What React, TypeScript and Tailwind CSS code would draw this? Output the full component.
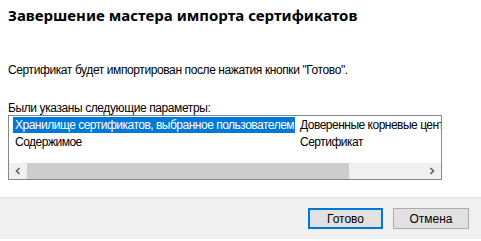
const rows = [
  { name: "Хранилище сертификатов, выбранное пользователем", value: "Доверенные корневые центры сертификации", selected: true },
  { name: "Содержимое", value: "Сертификат", selected: false },
];

const App = () => {
  return (
    <div
      className="w-[481px] h-[241px] bg-white flex flex-col overflow-hidden text-black"
      style={{ fontFamily: '"Liberation Sans", Arial, sans-serif' }}
    >
      <div className="flex-1 pl-2">
        <h1
          className="pt-[5px] text-[15px] leading-[20px] font-bold"
          style={{ fontFamily: '"Noto Sans", "Open Sans", sans-serif' }}
        >
          Завершение мастера импорта сертификатов
        </h1>
        <p className="mt-[37px] text-[12px] leading-[16px] tracking-[-0.4px]">
          Сертификат будет импортирован после нажатия кнопки "Готово".
        </p>
        <p className="mt-[22px] text-[12px] leading-[16px] tracking-[-0.4px]">
          Были указаны следующие параметры:
        </p>
        <div className="mt-[-1px] w-[434px] h-[65px] border border-[#828790] flex flex-col">
          <div className="flex-1 overflow-hidden pt-[1px] pl-[4px]">
            {rows.map((row, index) => (
              <div key={index} className="flex h-[17px] text-[12px] leading-[16px] tracking-[-0.5px] whitespace-nowrap">
                <div className="w-[287px] shrink-0 overflow-hidden">
                  <span className={row.selected ? "bg-[#0078d7] text-white pl-[2px] pr-[1px] py-[1px]" : "px-[2px]"}>
                    {row.name}
                  </span>
                </div>
                <div>{row.value}</div>
              </div>
            ))}
          </div>
          <div className="h-[16px] flex bg-[#f0f0f0]">
            <div className="w-[18px] flex items-center justify-center">
              <svg width="8" height="8" viewBox="0 0 8 8">
                <path d="M5.5 1 L2.5 4 L5.5 7" stroke="#606060" strokeWidth="1.6" fill="none" />
              </svg>
            </div>
            <div className="w-[322px] bg-[#cdcdcd]" />
            <div className="flex-1" />
            <div className="w-[18px] flex items-center justify-center">
              <svg width="8" height="8" viewBox="0 0 8 8">
                <path d="M2.5 1 L5.5 4 L2.5 7" stroke="#606060" strokeWidth="1.6" fill="none" />
              </svg>
            </div>
          </div>
        </div>
      </div>
      <div className="h-[42px] border-t border-[#dfdfdf] bg-[#f0f0f0] flex items-center justify-end gap-[10px] pr-[12px] text-[12px]">
        <button className="w-[75px] h-[21px] border-2 border-[#0078d7] bg-[#e1e1e1] leading-[16px]">
          Готово
        </button>
        <button className="w-[76px] h-[21px] border border-[#adadad] bg-[#e1e1e1] leading-[16px]">
          Отмена
        </button>
      </div>
      <div className="h-[2px] bg-white" />
    </div>
  );
};

export default App;
